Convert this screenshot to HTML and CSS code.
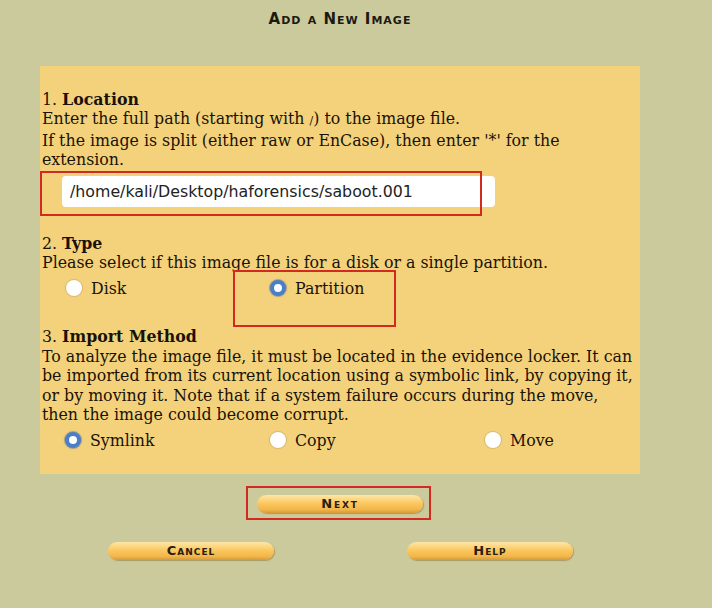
FILE: index.html
```html
<!DOCTYPE html>
<html>
<head>
<meta charset="utf-8">
<link rel="stylesheet" href="styles.css">
</head>
<body>
<div class="page">
  <h1 class="title">Add a New Image</h1>
  <div class="panel">
    <div class="section s1">
      <div>1. <b>Location</b></div>
      <div>Enter the full path (starting with <span class="slash">/</span>) to the image file.</div>
      <div>If the image is split (either raw or EnCase), then enter '*' for the extension.</div>
      <div class="field-row">
        <input class="path" type="text" value="/home/kali/Desktop/haforensics/saboot.001">
      </div>
    </div>
    <div class="section s2">
      <div>2. <b>Type</b></div>
      <div>Please select if this image file is for a disk or a single partition.</div>
      <div class="radios two">
        <label class="opt"><span class="radio"></span>Disk</label>
        <label class="opt"><span class="radio on"></span>Partition</label>
      </div>
    </div>
    <div class="section s3">
      <div>3. <b>Import Method</b></div>
      <div class="para">To analyze the image file, it must be located in the evidence locker. It can be imported from its current location using a symbolic link, by copying it, or by moving it. Note that if a system failure occurs during the move, then the image could become corrupt.</div>
      <div class="radios three">
        <label class="opt"><span class="radio on"></span>Symlink</label>
        <label class="opt"><span class="radio"></span>Copy</label>
        <label class="opt"><span class="radio"></span>Move</label>
      </div>
    </div>
  </div>
  <div class="next-row"><span class="btn next">Next</span></div>
  <div class="bottom-row">
    <span class="btn">Cancel</span>
    <span class="btn">Help</span>
  </div>
  <div class="mark m1"></div>
  <div class="mark m2"></div>
  <div class="mark m3"></div>
</div>
</body>
</html>
```
FILE: styles.css
```css
html, body {
  margin: 0;
  padding: 0;
  background: #cbca9c;
}
body {
  font-family: "DejaVu Serif", serif;
  color: #1a1208;
}
.page {
  position: relative;
  width: 600px;
  margin-left: 40px;
  height: 608px;
}
.title {
  margin: 0;
  padding-top: 10px;
  height: 66px;
  box-sizing: border-box;
  text-align: center;
  font-family: "DejaVu Sans", sans-serif;
  font-weight: bold;
  font-variant: small-caps;
  font-size: 15px;
  letter-spacing: 1px;
  line-height: 18px;
  color: #1c1a10;
}
.panel {
  background: #f4d27c;
  height: 408px;
  box-sizing: border-box;
  padding: 24px 0 0 2px;
  font-size: 15.8px;
  line-height: 19.4px;
}
.s1 { margin-bottom: 27px; }
.s2 { margin-bottom: 23px; }
.slash { font-size: 11px; }
.para { width: 595px; }
.field-row {
  padding: 6px 0 0 20px;
}
.path {
  display: block;
  width: 433px;
  height: 31px;
  box-sizing: border-box;
  border: none;
  border-radius: 4px;
  background: #fff;
  padding: 0 8px;
  font-family: "DejaVu Sans", sans-serif;
  font-size: 15.8px;
  color: #222;
}
.radios {
  display: flex;
  padding-left: 24px;
  height: 32px;
  align-items: center;
}
.radios.two .opt:first-child { width: 204px; }
.radios.three .opt:nth-child(1) { width: 205px; }
.radios.three .opt:nth-child(2) { width: 215px; }
.three { padding-left: 23px; }
.opt {
  display: flex;
  align-items: center;
  gap: 9px;
}
.radio {
  width: 16px;
  height: 16px;
  border-radius: 50%;
  background: #fff;
  box-shadow: 0 0 1px 1px rgba(170, 150, 100, 0.45);
  box-sizing: border-box;
}
.radio.on {
  border: 4px solid #4a7fc8;
  background: #fff;
  box-shadow: 0 0 1px 1px rgba(70, 100, 160, 0.5);
}
.next-row {
  display: flex;
  justify-content: center;
  padding-top: 21px;
}
.bottom-row {
  display: flex;
  justify-content: space-between;
  padding: 29px 67px 0 68px;
}
.btn {
  display: inline-block;
  width: 166px;
  height: 18px;
  border-radius: 9px;
  background: linear-gradient(to bottom, #fde7a8 0%, #fbc860 45%, #f3b64a 80%, #d59a3a 100%);
  box-shadow: 1px 1px 1px rgba(140, 110, 50, 0.5);
  text-align: center;
  font-family: "DejaVu Sans", sans-serif;
  font-weight: bold;
  font-variant: small-caps;
  font-size: 13px;
  letter-spacing: 1px;
  line-height: 18px;
  color: #2a2010;
}
.btn.next { letter-spacing: 1.8px; }
.mark {
  position: absolute;
  border: 2px solid #d22a20;
  box-sizing: border-box;
}
.m1 { left: 0; top: 171px; width: 442px; height: 45px; }
.m2 { left: 193px; top: 270px; width: 163px; height: 57px; }
.m3 { left: 206px; top: 486px; width: 185px; height: 34px; }
```
